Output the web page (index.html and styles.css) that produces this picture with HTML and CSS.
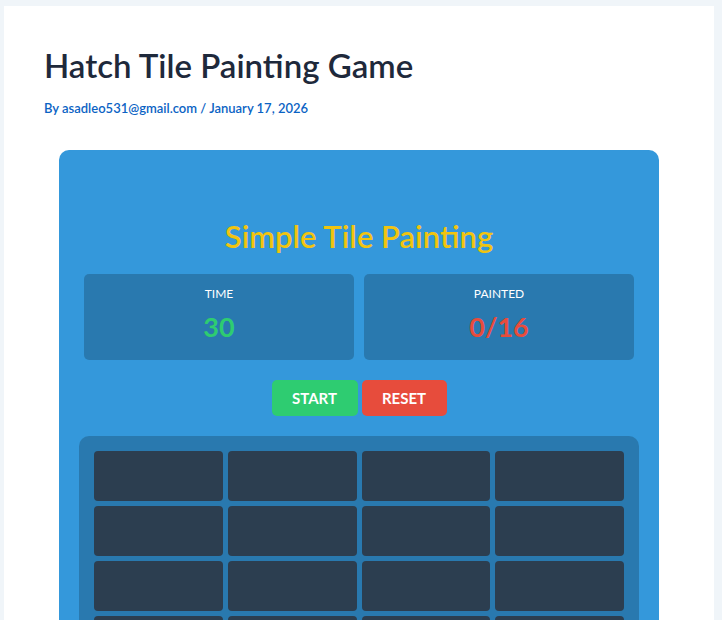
FILE: index.html
```html
<!DOCTYPE html>
<html>
<head>
<meta charset="utf-8">
<link rel="stylesheet" href="styles.css">
</head>
<body>
<div class="page">
  <h1 class="title">Hatch Tile Painting Game</h1>
  <div class="byline">By asadleo531@gmail.com / January 17, 2026</div>
  <div class="game">
    <h2 class="game-title">Simple Tile Painting</h2>
    <div class="stats">
      <div class="stat">
        <div class="stat-label">TIME</div>
        <div class="stat-value green">30</div>
      </div>
      <div class="stat">
        <div class="stat-label">PAINTED</div>
        <div class="stat-value red">0/16</div>
      </div>
    </div>
    <div class="buttons">
      <button class="btn btn-start">START</button>
      <button class="btn btn-reset">RESET</button>
    </div>
    <div class="grid">
      <div class="tile"></div><div class="tile"></div><div class="tile"></div><div class="tile"></div>
      <div class="tile"></div><div class="tile"></div><div class="tile"></div><div class="tile"></div>
      <div class="tile"></div><div class="tile"></div><div class="tile"></div><div class="tile"></div>
      <div class="tile"></div><div class="tile"></div><div class="tile"></div><div class="tile"></div>
    </div>
  </div>
</div>
</body>
</html>
```
FILE: styles.css
```css
html, body {
  margin: 0;
  padding: 0;
  background: #f0f5f9;
  font-family: Lato, "Noto Sans", sans-serif;
  overflow: hidden;
}
.page {
  background: #ffffff;
  margin: 6px 8px 0 4px;
  padding: 38px 40px 40px 40px;
  min-height: 700px;
}
.title {
  margin: 0;
  font-size: 33px;
  font-weight: 600;
  color: #1e293b;
  line-height: 42px;
}
.byline {
  margin-top: 13px;
  font-size: 13px;
  font-weight: 600;
  color: #0b63c4;
  line-height: 18px;
}
.game {
  width: 600px;
  margin: 33px auto 0;
  background: #3498db;
  border-radius: 10px;
  padding: 20px;
  box-sizing: border-box;
}
.game-title {
  margin: 46px 0 18px;
  text-align: center;
  color: #f1c40f;
  font-size: 31px;
  font-weight: 600;
  line-height: 40px;
}
.stats {
  display: flex;
  gap: 10px;
  margin: 0 5px;
}
.stat {
  flex: 1;
  height: 86px;
  background: rgba(0, 0, 0, 0.2);
  border-radius: 5px;
  text-align: center;
  color: #ffffff;
  box-sizing: border-box;
  padding-top: 12px;
}
.stat-label {
  font-size: 12px;
  line-height: 16px;
}
.stat-value {
  margin-top: 8px;
  font-size: 27px;
  font-weight: 700;
  line-height: 34px;
}
.green { color: #2ecc71; }
.red { color: #e74c3c; }
.buttons {
  display: flex;
  justify-content: center;
  gap: 4px;
  margin-top: 20px;
}
.btn {
  border: none;
  border-radius: 5px;
  height: 36px;
  padding: 0 20px;
  color: #ffffff;
  font-family: inherit;
  font-size: 15px;
  font-weight: 700;
}
.btn-start { background: #2ecc71; width: 86px; }
.btn-reset { background: #e74c3c; width: 85px; }
.grid {
  margin-top: 20px;
  background: rgba(0, 0, 0, 0.2);
  border-radius: 10px;
  padding: 15px;
  display: grid;
  grid-template-columns: repeat(4, 1fr);
  gap: 5px;
}
.tile {
  height: 50px;
  background: #2c3e50;
  border-radius: 4px;
}
```
